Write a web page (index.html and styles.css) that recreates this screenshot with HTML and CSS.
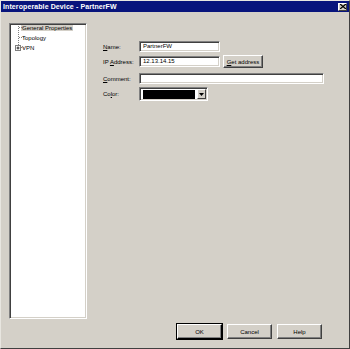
FILE: index.html
```html
<!DOCTYPE html>
<html>
<head>
<meta charset="utf-8">
<link rel="stylesheet" href="styles.css">
</head>
<body>
<div class="window">
  <div class="titlebar">
    <span class="title">Interoperable Device - PartnerFW</span>
    <span class="close">
      <svg width="6" height="5" viewBox="0 0 6 5"><path d="M0 0L6 5M6 0L0 5" stroke="#000" stroke-width="1.3"/></svg>
    </span>
  </div>
  <div class="content">
    <div class="tree">
      <svg class="tree-lines" width="14" height="40" viewBox="0 0 14 40">
        <path d="M6.5 2V23" stroke="#808080" stroke-dasharray="1 1"/>
        <path d="M7 3.5H12M7 13.5H12M9 23.5H12" stroke="#808080" stroke-dasharray="1 1"/>
        <rect x="3.5" y="21.5" width="5" height="5" fill="#fff" stroke="#808080"/>
        <path d="M4.5 24H7.5M6 22.5V25.5" stroke="#000" stroke-width="0.8"/>
      </svg>
      <ul class="tree-list">
        <li><span class="sel">General Properties</span></li>
        <li><span>Topology</span></li>
        <li><span>VPN</span></li>
      </ul>
    </div>
    <div class="form">
      <div class="row r-name">
        <label class="lbl"><u>N</u>ame:</label>
        <div class="field f-short">PartnerFW</div>
      </div>
      <div class="row r-ip">
        <label class="lbl">IP <u>A</u>ddress:</label>
        <div class="field f-short">12.13.14.15</div>
        <div class="btn btn-get"><u>G</u>et address</div>
      </div>
      <div class="row r-comment">
        <label class="lbl"><u>C</u>omment:</label>
        <div class="field f-long"></div>
      </div>
      <div class="row r-color">
        <label class="lbl">Co<u>l</u>or:</label>
        <div class="combo">
          <div class="swatch"></div>
          <div class="arrow"><svg width="5" height="3" viewBox="0 0 5 3"><path d="M0 0H5L2.5 3Z" fill="#000"/></svg></div>
        </div>
      </div>
    </div>
  </div>
  <div class="buttons">
    <div class="btn btn-main default">OK</div>
    <div class="btn btn-main">Cancel</div>
    <div class="btn btn-main">Help</div>
  </div>
</div>
</body>
</html>
```

FILE: styles.css
```css
* { box-sizing: border-box; }
html, body { margin: 0; padding: 0; }
body {
  background: #d4d0c8;
  font-family: "Liberation Sans", Arial, sans-serif;
  font-size: 6px;
  color: #000;
}
.window {
  width: 350px;
  height: 349px;
  background: #d4d0c8;
  border-top: 1px solid #e8e6e0;
  border-left: 1px solid #e8e6e0;
  border-right: 1px solid #404040;
  border-bottom: 1px solid #404040;
  display: flex;
  flex-direction: column;
}
.titlebar {
  height: 11px;
  background: #08147c;
  display: flex;
  align-items: center;
  justify-content: space-between;
  padding: 0 2px 0 2px;
}
.title {
  color: #fff;
  font-weight: bold;
  font-size: 7px;
  line-height: 11px;
  letter-spacing: 0.1px;
}
.close {
  width: 9px;
  height: 8px;
  background: #d4d0c8;
  border-top: 1px solid #fff;
  border-left: 1px solid #fff;
  border-right: 1px solid #404040;
  border-bottom: 1px solid #404040;
  display: flex;
  align-items: center;
  justify-content: center;
}
.close svg { display: block; }
.content {
  display: flex;
  padding: 11px 0 0 8px;
  flex: 0 0 auto;
}
.tree {
  position: relative;
  width: 78px;
  height: 296px;
  background: #fff;
  border-top: 1px solid #808080;
  border-left: 1px solid #808080;
  border-right: 1px solid #fff;
  border-bottom: 1px solid #fff;
  box-shadow: inset 1px 1px 0 #404040, inset -1px -1px 0 #d4d0c8;
}
.tree-lines {
  position: absolute;
  left: 2px;
  top: 0px;
}
.tree-list {
  list-style: none;
  margin: -1px 0 0 0;
  padding: 0 0 0 11px;
  font-size: 6px;
}
.tree-list li {
  height: 10px;
  line-height: 10px;
  color: #000;
}
.tree-list li span {
  padding: 0 1px;
}
.sel {
  background: #d4d0c8;
}
.form {
  margin-left: 16px;
  padding-top: 18px;
  display: flex;
  flex-direction: column;
}
.row {
  display: flex;
  align-items: center;
}
.lbl {
  width: 36px;
  font-size: 6px;
}
.r-name { height: 11px; }
.r-ip { height: 13px; margin-top: 3px; }
.r-comment { height: 11px; margin-top: 5px; }
.r-color { height: 14px; margin-top: 3px; }
.field {
  height: 11px;
  background: #fff;
  border-top: 1px solid #808080;
  border-left: 1px solid #808080;
  border-right: 1px solid #fff;
  border-bottom: 1px solid #fff;
  box-shadow: inset 1px 1px 0 #404040, inset -1px -1px 0 #d4d0c8;
  padding: 0 3px;
  line-height: 9px;
  font-size: 6px;
}
.f-short { width: 81px; }
.f-long { width: 185px; }
.btn {
  background: #d4d0c8;
  border-top: 1px solid #fff;
  border-left: 1px solid #fff;
  border-right: 1px solid #404040;
  border-bottom: 1px solid #404040;
  box-shadow: inset -1px -1px 0 #808080;
  display: flex;
  align-items: center;
  justify-content: center;
  font-size: 6px;
}
.btn-get {
  width: 40px;
  height: 13px;
  margin-left: 3px;
}
.combo {
  width: 69px;
  height: 14px;
  background: #fff;
  border-top: 1px solid #808080;
  border-left: 1px solid #808080;
  border-right: 1px solid #fff;
  border-bottom: 1px solid #fff;
  box-shadow: inset 1px 1px 0 #404040, inset -1px -1px 0 #d4d0c8;
  display: flex;
  align-items: center;
  padding: 2px 1px 2px 3px;
}
.swatch {
  flex: 1;
  height: 9px;
  background: #000;
  margin-right: 2px;
}
.arrow {
  width: 9px;
  height: 10px;
  background: #d4d0c8;
  border-top: 1px solid #fff;
  border-left: 1px solid #fff;
  border-right: 1px solid #404040;
  border-bottom: 1px solid #404040;
  display: flex;
  align-items: center;
  justify-content: center;
}
.arrow svg { display: block; }
.buttons {
  display: flex;
  justify-content: flex-end;
  gap: 5px;
  margin-top: 5px;
  padding-right: 27px;
}
.btn-main {
  width: 45px;
  height: 15px;
}
.default {
  outline: 1px solid #000;
  outline-offset: 0;
  border-right-color: #000;
  border-bottom-color: #000;
}
u { text-decoration: underline; }
```
